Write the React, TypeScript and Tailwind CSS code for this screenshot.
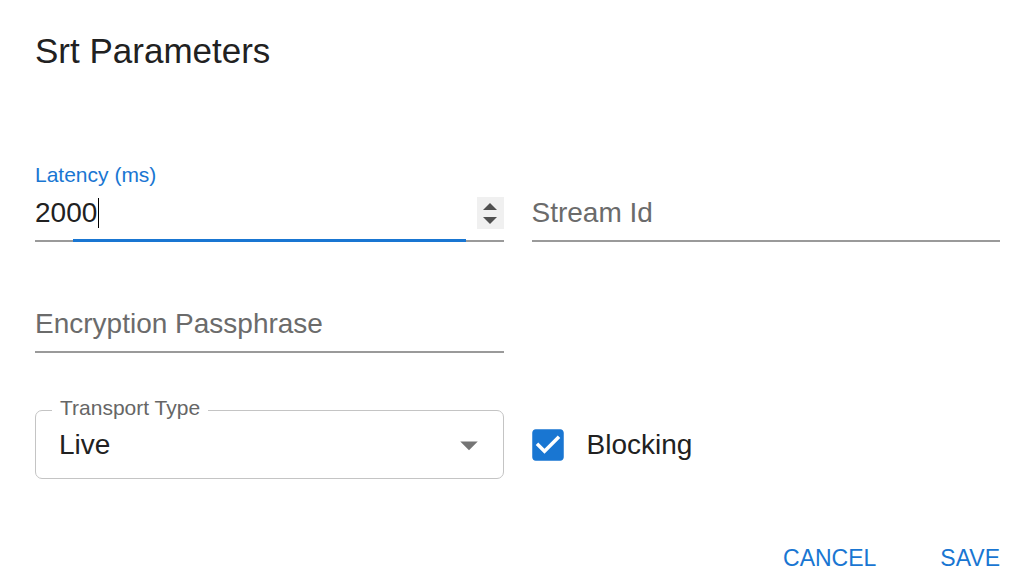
import React from "react";

type FieldProps = {
  label?: string;
  value?: string;
  placeholder?: string;
  focused?: boolean;
  spinner?: boolean;
};

const UnderlineField = ({ label, value, placeholder, focused, spinner }: FieldProps) => {
  return (
    <div className="relative flex flex-col">
      <div className="h-[24px] text-[21px] leading-[24px] text-[#1976d2]">{label}</div>
      <div className="mt-[10px] flex h-[32px] items-center">
        {value !== undefined ? (
          <div className="flex h-[32px] items-center text-[28px] leading-[32px] text-[#212121]">
            {value}
            {focused && <span className="ml-px inline-block h-[30px] w-px bg-black" />}
          </div>
        ) : (
          <div className="text-[28px] leading-[32px] text-[#6b6b6b]">{placeholder}</div>
        )}
        {spinner && (
          <div className="ml-auto flex h-[32px] w-[27px] flex-col items-center justify-center gap-[7px] bg-[#f0f0f0]">
            <svg width="14" height="7" viewBox="0 0 14 7">
              <path d="M7 0L14 7H0z" fill="#505050" />
            </svg>
            <svg width="14" height="7" viewBox="0 0 14 7">
              <path d="M0 0h14L7 7z" fill="#505050" />
            </svg>
          </div>
        )}
      </div>
      <div className="mt-[11px] h-[2px] bg-[#9a9a9a]" />
      {focused && (
        <div className="absolute bottom-0 left-[38px] right-[38px] h-[3px] bg-[#1976d2]" />
      )}
    </div>
  );
};

export default function App() {
  return (
    <div
      className="h-[582px] w-full overflow-hidden bg-white pl-[35px] pr-[27px]"
      style={{ fontFamily: '"Liberation Sans", Arial, sans-serif' }}
    >
      {/* Title */}
      <h2 className="pt-[31px] text-[35px] leading-[40px] text-[#212121]">Srt Parameters</h2>

      {/* Fields */}
      <div className="mt-[92px] grid grid-cols-2 gap-x-[28px] gap-y-[32px]">
        <UnderlineField label="Latency (ms)" value="2000" focused spinner />
        <UnderlineField placeholder="Stream Id" />
        <UnderlineField placeholder="Encryption Passphrase" />
        <div />
      </div>

      {/* Transport + blocking */}
      <div className="mt-[57px] grid grid-cols-2 gap-x-[28px]">
        <div className="relative flex h-[69px] items-center rounded-[7px] border border-[#c4c4c4] pl-[23px] pr-[13px]">
          <span className="absolute left-[16px] top-[-15px] bg-white px-[8px] text-[21px] leading-[24px] text-[#666666]">
            Transport Type
          </span>
          <span className="text-[28px] leading-[32px] text-[#212121]">Live</span>
          <svg className="ml-auto" width="42" height="42" viewBox="0 0 24 24">
            <path d="M7 10l5 5 5-5z" fill="#757575" />
          </svg>
        </div>
        <div className="flex items-center">
          <svg className="-ml-[5px]" width="42" height="42" viewBox="0 0 24 24">
            <path
              d="M19 3H5c-1.11 0-2 .9-2 2v14c0 1.1.89 2 2 2h14c1.11 0 2-.9 2-2V5c0-1.1-.89-2-2-2zm-9 14l-5-5 1.41-1.41L10 14.17l7.59-7.59L19 8l-9 9z"
              fill="#1976d2"
            />
          </svg>
          <span className="ml-[18px] text-[28px] leading-[32px] text-[#212121]">Blocking</span>
        </div>
      </div>

      {/* Actions */}
      <div className="mt-[65px] flex justify-end gap-[64px] pr-px">
        <button className="text-[23px] leading-[28px] text-[#1976d2]">CANCEL</button>
        <button className="-mr-px text-[23px] leading-[28px] text-[#1976d2]">SAVE</button>
      </div>
    </div>
  );
}
